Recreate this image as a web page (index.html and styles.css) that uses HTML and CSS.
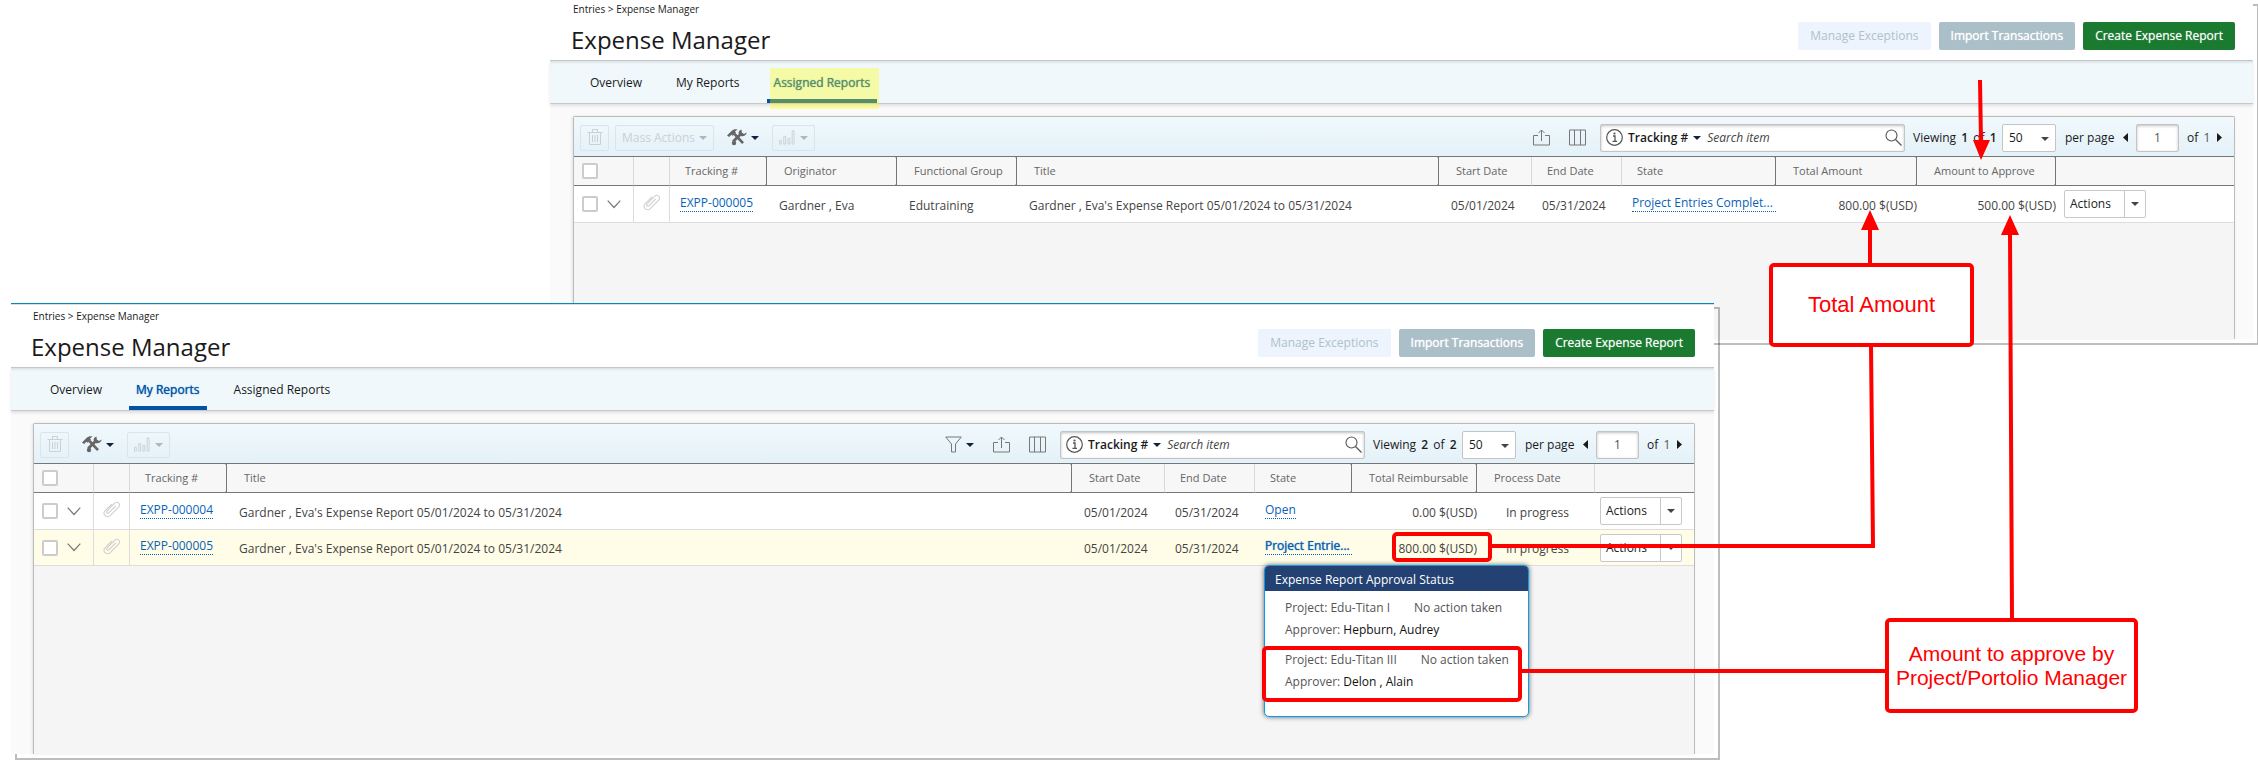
FILE: index.html
```html
<!DOCTYPE html>
<html lang="en">
<head>
<meta charset="utf-8">
<title>Expense Manager</title>
<link rel="stylesheet" href="styles.css">
</head>
<body>
<svg class="defs" aria-hidden="true">
  <symbol id="i-trash" viewBox="0 0 16 17"><path d="M.5 3.500h15M5.500 3.500V.5h5v3M2.500 3.500v12h11v-12M5.500 6v7M8 6v7M10.500 6v7" fill="none" stroke="currentColor"/></symbol>
  <symbol id="i-tools" viewBox="0 0 20 17"><path d="M0 6.500 4.500 2C6 .5 8.500 0 10.500.5L8 2.500l1 1.200-3.200 3.100-1.400-1L2.200 8z" fill="currentColor"/><path d="M7.500 5 16 14.200" stroke="currentColor" stroke-width="2.600" fill="none"/><path d="M14.500.5c-2.400.6-3.300 2.500-2.700 4.500L5.200 11.400l2 2.200L13.800 7c2.600.8 5.600-.8 5.900-3.600L17 5l-2.200-1.600z" fill="currentColor"/><circle cx="7" cy="14" r="2.200" fill="currentColor"/></symbol>
  <symbol id="i-chart" viewBox="0 0 17 15"><path d="M.5 14.500v-4h2v4zM5 14.500v-8h2v8zM9.500 14.500v-6h2v6zM14 14.500V.5h2v14z" fill="none" stroke="currentColor"/></symbol>
  <symbol id="i-filter" viewBox="0 0 17 16"><path d="M.7.5h15.600L10.500 7.500v8h-4v-8z" fill="none" stroke="currentColor"/></symbol>
  <symbol id="i-export" viewBox="0 0 17 17"><path d="M5 6.500H.5v9.500h16V6.500H12M8.500 12V1M5.500 4l3-3 3 3" fill="none" stroke="currentColor"/></symbol>
  <symbol id="i-columns" viewBox="0 0 17 16"><path d="M.5.5h16v15H.5zM5.500.5v15M11.500.5v15" fill="none" stroke="currentColor"/></symbol>
  <symbol id="i-info" viewBox="0 0 17 17"><circle cx="8.500" cy="8.500" r="7.800" fill="none" stroke="currentColor" stroke-width="1.200"/><path d="M7 7h2v5M6.500 12.300h4.500" stroke="currentColor" stroke-width="1.300" fill="none"/><circle cx="8.500" cy="4.500" r="1.100" fill="currentColor"/></symbol>
  <symbol id="i-search" viewBox="0 0 17 17"><circle cx="6.500" cy="6.500" r="5.500" fill="none" stroke="currentColor" stroke-width="1.100"/><path d="m10.500 10.500 6 6" stroke="currentColor" stroke-width="1.300"/></symbol>
  <symbol id="i-chevron" viewBox="0 0 14 9"><path d="m.7.7 6.300 6.800L13.300.7" fill="none" stroke="currentColor" stroke-width="1.200"/></symbol>
  <symbol id="i-clip" viewBox="0 0 18 17"><path d="m12.700 5-6.600 6.700c-1.500 1.500-3.400-.4-1.900-1.900l7.300-7.400c3-2.800 7 .8 4 3.900l-8.300 8.300C3.600 17.600-1.200 13.200 2 9.800L9 3" fill="none" stroke="currentColor" stroke-width="1.100"/></symbol>
  <symbol id="i-down" viewBox="0 0 8 4"><path d="M0 0h8L4 4z" fill="currentColor"/></symbol>
  <symbol id="i-prev" viewBox="0 0 5 9"><path d="M5 0v9L0 4.500z" fill="currentColor"/></symbol>
  <symbol id="i-next" viewBox="0 0 5 9"><path d="M0 0v9l5-4.500z" fill="currentColor"/></symbol>
</svg>

<main class="canvas">

  <section class="window window-back">
    <div class="surface">
      <header class="head">
        <p class="crumbs">Entries &gt; Expense Manager</p>
        <div class="title-row">
          <h1>Expense Manager</h1>
          <div class="head-actions">
            <button class="btn btn-off" disabled>Manage Exceptions</button>
            <button class="btn btn-muted">Import Transactions</button>
            <button class="btn btn-primary">Create Expense Report</button>
          </div>
        </div>
      </header>
      <nav class="tabs">
        <a class="tab" href="#overview">Overview</a>
        <a class="tab" href="#my">My Reports</a>
        <a class="tab tab-active tab-marked" href="#assigned">Assigned Reports</a>
      </nav>
      <div class="content">
        <div class="panel">
          <div class="toolbar">
            <button class="tool tool-box" aria-label="Delete" disabled><svg class="s16"><use href="#i-trash"/></svg></button>
            <button class="tool tool-box tool-mass" disabled>Mass Actions <svg class="caret"><use href="#i-down"/></svg></button>
            <button class="tool tool-plain" aria-label="Tools"><svg class="s20"><use href="#i-tools"/></svg><svg class="caret"><use href="#i-down"/></svg></button>
            <button class="tool tool-box tool-chart" aria-label="Charts" disabled><svg class="s16"><use href="#i-chart"/></svg><svg class="caret"><use href="#i-down"/></svg></button>
            <div class="tool-end">
              <button class="icon-btn" aria-label="Export"><svg class="s17"><use href="#i-export"/></svg></button>
              <button class="icon-btn" aria-label="Columns"><svg class="s17"><use href="#i-columns"/></svg></button>
              <div class="search">
                <svg class="s17"><use href="#i-info"/></svg>
                <button class="search-by">Tracking # <svg class="caret"><use href="#i-down"/></svg></button>
                <input class="search-input" type="text" placeholder="Search item" aria-label="Search item">
                <svg class="s17"><use href="#i-search"/></svg>
              </div>
              <p class="viewing">Viewing <b>1</b> of <b>1</b></p>
              <span class="select"><select id="size-a"><option>50</option></select></span>
              <label class="per-page" for="size-a">per page</label>
              <button class="page-btn" aria-label="Previous page"><svg class="arrow"><use href="#i-prev"/></svg></button>
              <input class="page-input" type="text" value="1" aria-label="Page">
              <span class="of">of <span>1</span></span>
              <button class="page-btn page-next" aria-label="Next page"><svg class="arrow"><use href="#i-next"/></svg></button>
            </div>
          </div>
          <table class="grid">
            <colgroup><col class="w60"><col class="w36"><col class="w97"><col class="w130"><col class="w120"><col><col class="w93"><col class="w90"><col class="w154"><col class="w141"><col class="w139"><col class="w178"></colgroup>
            <thead><tr>
              <th class="c-check"><input type="checkbox" aria-label="Select all"></th><th></th><th class="sep">Tracking #</th><th class="sep after">Originator</th><th class="sep after">Functional Group</th><th class="sep after">Title</th><th class="after">Start Date</th><th>End Date</th><th class="sep">State</th><th class="sep after">Total Amount</th><th class="sep after">Amount to Approve</th><th></th>
            </tr></thead>
            <tbody><tr>
              <td class="c-check line"><div class="check"><input type="checkbox" aria-label="Select EXPP-000005"><svg class="chev"><use href="#i-chevron"/></svg></div></td>
              <td class="line c-clip"><svg class="clip"><use href="#i-clip"/></svg></td>
              <td class="c-link"><a class="link" href="#r5">EXPP-000005</a></td>
              <td class="after">Gardner , Eva</td><td class="after">Edutraining</td>
              <td class="after">Gardner , Eva's Expense Report 05/01/2024 to 05/31/2024</td>
              <td class="after">05/01/2024</td><td>05/31/2024</td>
              <td class="c-link"><a class="link link-fill" href="#s5">Project Entries Complet...</a></td>
              <td class="num">800.00 $(USD)</td><td class="num">500.00 $(USD)</td>
              <td class="c-act"><div class="split"><button>Actions</button><button aria-label="More actions"><svg class="caret"><use href="#i-down"/></svg></button></div></td>
            </tr></tbody>
          </table>
        </div>
      </div>
    </div>
  </section>

  <section class="window window-front">
    <div class="surface">
      <header class="head">
        <p class="crumbs">Entries &gt; Expense Manager</p>
        <div class="title-row">
          <h1>Expense Manager</h1>
          <div class="head-actions">
            <button class="btn btn-off" disabled>Manage Exceptions</button>
            <button class="btn btn-muted">Import Transactions</button>
            <button class="btn btn-primary">Create Expense Report</button>
          </div>
        </div>
      </header>
      <nav class="tabs">
        <a class="tab" href="#overview">Overview</a>
        <a class="tab tab-active" href="#my">My Reports</a>
        <a class="tab" href="#assigned">Assigned Reports</a>
      </nav>
      <div class="content">
        <div class="panel">
          <div class="toolbar">
            <button class="tool tool-box" aria-label="Delete" disabled><svg class="s16"><use href="#i-trash"/></svg></button>
            <button class="tool tool-plain" aria-label="Tools"><svg class="s20"><use href="#i-tools"/></svg><svg class="caret"><use href="#i-down"/></svg></button>
            <button class="tool tool-box tool-chart" aria-label="Charts" disabled><svg class="s16"><use href="#i-chart"/></svg><svg class="caret"><use href="#i-down"/></svg></button>
            <div class="tool-end">
              <button class="icon-btn" aria-label="Filter"><svg class="s17"><use href="#i-filter"/></svg><svg class="caret"><use href="#i-down"/></svg></button>
              <button class="icon-btn" aria-label="Export"><svg class="s17"><use href="#i-export"/></svg></button>
              <button class="icon-btn" aria-label="Columns"><svg class="s17"><use href="#i-columns"/></svg></button>
              <div class="search">
                <svg class="s17"><use href="#i-info"/></svg>
                <button class="search-by">Tracking # <svg class="caret"><use href="#i-down"/></svg></button>
                <input class="search-input" type="text" placeholder="Search item" aria-label="Search item">
                <svg class="s17"><use href="#i-search"/></svg>
              </div>
              <p class="viewing">Viewing <b>2</b> of <b>2</b></p>
              <span class="select"><select id="size-b"><option>50</option></select></span>
              <label class="per-page" for="size-b">per page</label>
              <button class="page-btn" aria-label="Previous page"><svg class="arrow"><use href="#i-prev"/></svg></button>
              <input class="page-input" type="text" value="1" aria-label="Page">
              <span class="of">of <span>1</span></span>
              <button class="page-btn page-next" aria-label="Next page"><svg class="arrow"><use href="#i-next"/></svg></button>
            </div>
          </div>
          <table class="grid">
            <colgroup><col class="w60"><col class="w36"><col class="w97"><col><col class="w93"><col class="w90"><col class="w97"><col class="w125"><col class="w118"><col class="w99"></colgroup>
            <thead><tr>
              <th class="c-check"><input type="checkbox" aria-label="Select all"></th><th></th><th class="sep">Tracking #</th><th class="sep after">Title</th><th class="after">Start Date</th><th>End Date</th><th class="sep">State</th><th class="sep after">Total Reimbursable</th><th class="after">Process Date</th><th></th>
            </tr></thead>
            <tbody>
            <tr>
              <td class="c-check line"><div class="check"><input type="checkbox" aria-label="Select EXPP-000004"><svg class="chev"><use href="#i-chevron"/></svg></div></td>
              <td class="line c-clip"><svg class="clip"><use href="#i-clip"/></svg></td>
              <td class="c-link"><a class="link" href="#r4">EXPP-000004</a></td>
              <td class="after">Gardner , Eva's Expense Report 05/01/2024 to 05/31/2024</td>
              <td class="after">05/01/2024</td><td>05/31/2024</td>
              <td class="c-link"><a class="link" href="#s4">Open</a></td>
              <td class="num">0.00 $(USD)</td><td class="c-process">In progress</td>
              <td class="c-act c-act-tight"><div class="split"><button>Actions</button><button aria-label="More actions"><svg class="caret"><use href="#i-down"/></svg></button></div></td>
            </tr>
            <tr class="row-hover">
              <td class="c-check line"><div class="check"><input type="checkbox" aria-label="Select EXPP-000005"><svg class="chev"><use href="#i-chevron"/></svg></div></td>
              <td class="line c-clip"><svg class="clip"><use href="#i-clip"/></svg></td>
              <td class="c-link"><a class="link" href="#r5">EXPP-000005</a></td>
              <td class="after">Gardner , Eva's Expense Report 05/01/2024 to 05/31/2024</td>
              <td class="after">05/01/2024</td><td>05/31/2024</td>
              <td class="c-link"><a class="link link-fill link-strong" href="#s5">Project Entrie...</a></td>
              <td class="num">800.00 $(USD)</td><td class="c-process">In progress</td>
              <td class="c-act c-act-tight"><div class="split"><button>Actions</button><button aria-label="More actions"><svg class="caret"><use href="#i-down"/></svg></button></div></td>
            </tr>
            </tbody>
          </table>
        </div>
      </div>
    </div>
    <aside class="popup">
      <h2>Expense Report Approval Status</h2>
      <div class="approval">
        <p>Project: Edu-Titan I<span class="status">No action taken</span></p>
        <p>Approver: <span class="person">Hepburn, Audrey</span></p>
      </div>
      <div class="approval">
        <p>Project: Edu-Titan III<span class="status">No action taken</span></p>
        <p>Approver: <span class="person">Delon , Alain</span></p>
      </div>
    </aside>
  </section>

  <svg class="wires" viewBox="0 0 1000 771" aria-hidden="true">
    <g fill="none" stroke="#f00" stroke-width="4">
      <path d="M234 546H615L613 345M612 265V228M264 671H628M754 620L752 233M722 80L723 142"/>
    </g>
    <path d="M612 210l9 20h-18zM752 215l9 20h-18zM723 160l9-20h-17z" fill="#f00"/>
  </svg>
  <div class="mark mark-amount"></div>
  <div class="mark mark-approver"></div>
  <div class="note note-total">Total Amount</div>
  <div class="note note-approve">Amount to approve by Project/Portolio Manager</div>
</main>
</body>
</html>
```

FILE: styles.css
```css
* { box-sizing: border-box; }
body { margin: 0; background: #fff; color: #1a1a1a; font: 12px/16px "Open Sans", "Noto Sans", sans-serif; }
p, h1, h2 { margin: 0; font-weight: 400; }
button, input, select { font: inherit; color: inherit; margin: 0; }
button { background: none; border: 0; padding: 0; }
a { color: inherit; text-decoration: none; }
svg { flex: none; display: block; }
.defs { position: absolute; width: 0; height: 0; }

.canvas { position: relative; min-height: 100vh; overflow: hidden; }

/* Windows */
.window { position: absolute; isolation: isolate; }
.window::before { content: ""; position: absolute; z-index: -1; top: 4px; left: 4px; right: -6px; bottom: -6px; border: 2px solid rgba(0, 0, 0, .26); }
.window-back { top: 0; left: 550px; right: 5px; }
.window-front { top: 303px; left: 11px; right: 544px; }
.surface { display: flex; flex-direction: column; background: #fafafa; }
.window-back .surface { min-height: 339px; }
.window-front .surface { min-height: 451px; border-top: 1px solid #0b86c1; }
.window-front .head { border-top: 1px solid #ddd; padding-top: 4px; }

.head { padding: 2px 18px 4px 23px; background: #fff; border-bottom: 1px solid #c8c8c8; }
.window-front .head { padding-left: 22px; padding-right: 19px; }
.crumbs { font-size: 10px; line-height: 14px; }
.title-row { display: flex; align-items: center; justify-content: space-between; height: 40px; }
h1 { margin-left: -2px; padding-top: 7px; font-size: 24px; line-height: 32px; }
.head-actions { display: flex; gap: 8px; }
.btn { height: 28px; padding: 0 12px; border-radius: 2px; color: #fff; white-space: nowrap; }
.btn-off { background: #edf4fd; color: #afc1ca; }
.btn-muted { background: #abbfc8; text-shadow: 0 0 1px #fff; }
.btn-primary { background: #1a7b30; text-shadow: 0 0 1px rgba(255, 255, 255, .6); }

.tabs { display: flex; gap: 20px; height: 43px; padding-left: 33px; background: #f0f8fc; border-bottom: 1px solid #c8c8c8; box-shadow: inset 0 3px 3px -2px rgba(0, 0, 0, .12), 0 2px 3px rgba(0, 0, 0, .1); }
.window-front .tabs { padding-left: 32px; }
.tab { position: relative; padding: 14px 7px 0; }
.tab-active { color: #0053a5; text-shadow: 0 0 1px #0053a5; border-bottom: 4px solid #0053a5; }
.tab-marked::after { content: ""; position: absolute; top: 7px; left: 3px; right: -2px; bottom: -10px; background: rgba(255, 255, 0, .34); }

.content { flex: 1; display: flex; padding: 12px 18px 0 23px; }
.window-front .content { padding-left: 22px; padding-right: 19px; }
.panel { flex: 1; min-width: 0; background: #f5f5f5; border: 1px solid #bbb; border-bottom: 0; border-radius: 2px 2px 0 0; box-shadow: -1px 0 3px rgba(0, 0, 0, .1); }

/* Toolbar */
.toolbar { display: flex; align-items: center; height: 39px; padding: 2px 12px 0 6px; background: linear-gradient(#f1f9fd, #e3f1f8); }
.tool { display: flex; align-items: center; justify-content: center; height: 26px; }
.tool-box { width: 29px; border: 1px solid #dbe4e9; border-radius: 2px; color: #c9d1d6; }
.tool-box .caret { color: #a9b8c1; }
.tool-mass { width: 99px; margin-left: 6px; gap: 4px; }
.tool-chart { width: 43px; gap: 5px; }
.tool-plain { width: 58px; gap: 4px; color: #666; }
.tool-plain .caret, .icon-btn .caret { color: #14213f; }
.s16 { width: 16px; height: 17px; }
.s17 { width: 17px; height: 17px; color: #555; }
.s20 { width: 20px; height: 17px; }
.caret { width: 8px; height: 4px; }
.arrow { width: 5px; height: 9px; }
.tool-end { display: flex; align-items: center; margin-left: auto; }
.icon-btn { display: flex; align-items: center; gap: 4px; margin-right: 19px; }
.icon-btn .s17 { color: #777; }
.icon-btn + .search { margin-left: -5px; }
.search { display: flex; align-items: center; width: 305px; height: 28px; padding: 0 2px 0 5px; background: #fff; border: 1px solid #c4c4c4; border-radius: 2px; box-shadow: inset 0 1px 3px rgba(0, 0, 0, .25); }
.search-by { display: flex; align-items: center; gap: 5px; margin-left: 5px; font-weight: 600; white-space: nowrap; }
.search-by .caret { color: #14213f; }
.search-input { flex: 1; min-width: 0; margin-left: 6px; padding: 0; border: 0; background: none; font-style: italic; }
.search-input::placeholder { color: #444; opacity: 1; }
.viewing { width: 97px; padding-left: 8px; white-space: nowrap; }
.viewing b { font-weight: 600; padding: 0 2px; }
.select { position: relative; width: 54px; height: 28px; }
.select::after { content: ""; position: absolute; right: 7px; top: 13px; border: 4px solid transparent; border-top-color: #444; border-bottom: 0; pointer-events: none; }
.select select { appearance: none; width: 100%; height: 100%; padding: 0 6px; background: #fff; border: 1px solid #c4c4c4; border-radius: 2px; }
.per-page { width: 67px; padding-left: 9px; }
.page-input { width: 43px; height: 28px; margin-left: 8px; text-align: center; background: #fff; border: 1px solid #c4c4c4; border-radius: 2px; box-shadow: inset 0 1px 3px rgba(0, 0, 0, .25); color: #555; }
.of { width: 38px; padding-left: 8px; }
.of span { padding-left: 2px; color: #555; }

/* Grid */
.grid { width: 100%; table-layout: fixed; border-collapse: separate; border-spacing: 0; border-top: 1px solid #777; }
.w60 { width: 60px; } .w36 { width: 36px; } .w97 { width: 97px; } .w130 { width: 130px; }
.w120 { width: 120px; } .w93 { width: 93px; } .w90 { width: 90px; } .w154 { width: 154px; }
.w141 { width: 141px; } .w139 { width: 139px; } .w178 { width: 178px; } .w125 { width: 125px; }
.w118 { width: 118px; } .w99 { width: 99px; }
th { position: relative; height: 29px; padding: 0 0 0 15px; text-align: left; font-size: 11px; font-weight: 400; color: #666; background: #f7f7f7; border-right: 1px solid #d8d8d8; border-bottom: 1px solid #777; white-space: nowrap; }
th.after { padding-left: 17px; }
th.sep { border-right-color: #777; }
th.sep::before, th.sep::after { content: ""; position: absolute; right: -3px; border: 2px solid transparent; }
th.sep::before { top: 0; border-top-color: #777; border-bottom: 0; }
th.sep::after { bottom: 0; border-bottom-color: #777; border-top: 0; }
th:last-child { border-right: 0; }
td { height: 37px; padding: 3px 0 0 10px; background: #fff; border-bottom: 1px solid #ddd; color: #444; white-space: nowrap; }
td.after { padding-left: 12px; }
td.line { border-right: 1px solid #ddd; }
.row-hover td { height: 36px; background: #fffde7; }
th.c-check, td.c-check { padding: 0 0 0 8px; vertical-align: middle; }
.check { display: flex; align-items: center; gap: 9px; color: #777; }
th.c-check input { display: block; }
input[type="checkbox"] { appearance: none; width: 16px; height: 16px; background: #fff; border: 2px solid #ccc; border-radius: 2px; }
.chev { width: 14px; height: 9px; }
td.c-clip { padding: 0 0 3px 9px; }
.clip { width: 18px; height: 17px; color: #d0d0d0; }
td.c-link { padding-top: 0; padding-bottom: 3px; }
.link { display: block; width: fit-content; color: #0a5fb8; line-height: 17px; border-bottom: 1px dotted #0a5fb8; }
.link-fill { width: auto; }
.link-strong { text-shadow: 0 0 1px #0a5fb8; }
td.num { padding-left: 0; text-align: right; }
td.c-process { padding-left: 29px; }
td.c-act { padding: 0 0 0 8px; }
td.c-act-tight { padding-left: 5px; }
.split { display: flex; width: 82px; height: 28px; background: #fff; border: 1px solid #c8c8c8; border-radius: 2px; color: #222; }
.split button:first-child { flex: 1; text-align: left; padding-left: 5px; }
.split button:last-child { display: flex; align-items: center; justify-content: center; width: 21px; border-left: 1px solid #c8c8c8; color: #444; }

/* Approval popup */
.popup { position: absolute; top: 262px; right: 185px; width: 265px; min-height: 152px; background: #fff; border: 1px solid #0a9bf0; border-radius: 5px; box-shadow: 0 0 5px rgba(0, 0, 0, .6); color: #555; overflow: hidden; }
.popup h2 { padding: 6px 10px 3px; background: #234173; color: #fff; font-size: 12px; line-height: 16px; }
.approval { padding: 6px 0 2px 20px; line-height: 22px; }
.status { margin-left: 24px; }
.person { color: #111; }

/* Callouts */
.wires { position: absolute; top: 0; right: 0; width: 1000px; height: 771px; pointer-events: none; }
.mark { position: absolute; border: 4px solid #f00; border-radius: 5px; }
.mark-amount { top: 532px; right: 766px; width: 100px; height: 30px; }
.mark-approver { top: 646px; right: 736px; width: 260px; height: 56px; }
.note { position: absolute; display: flex; align-items: center; justify-content: center; text-align: center; background: #fff; border: 4px solid #f00; border-radius: 5px; color: #f00; font: 21px/24px "Liberation Sans", Arial, sans-serif; }
.note-total { top: 263px; right: 284px; width: 205px; height: 84px; font-size: 22px; }
.note-approve { top: 618px; right: 120px; width: 253px; height: 95px; }
```
